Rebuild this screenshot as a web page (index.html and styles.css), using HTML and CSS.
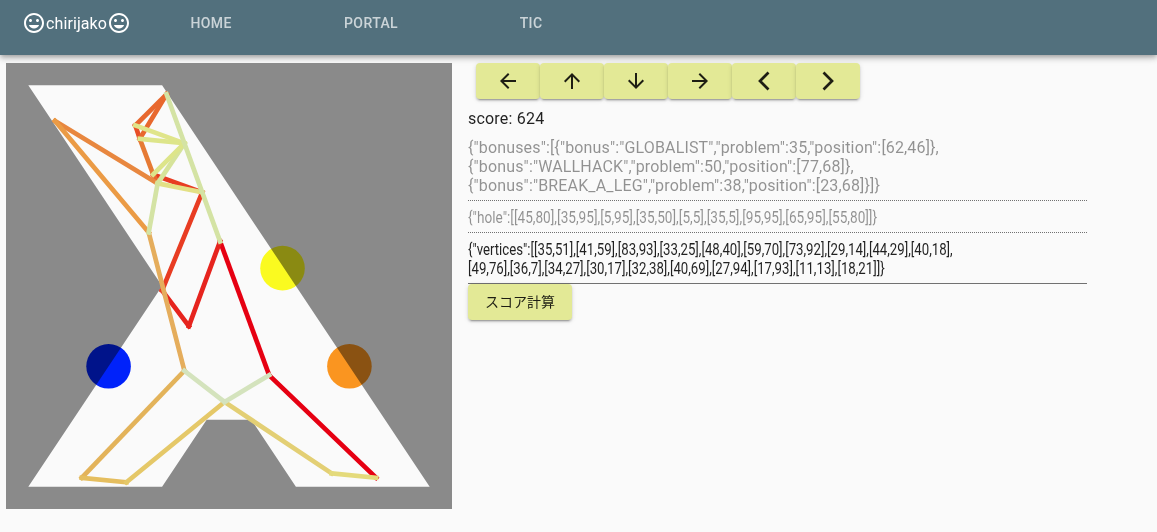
FILE: index.html
```html
<!DOCTYPE html>
<html lang="ja">
<head>
<meta charset="utf-8">
<title>chirijako</title>
<link rel="stylesheet" href="styles.css">
</head>
<body>
<header class="appbar">
  <div class="brand">
    <svg class="mood" viewBox="0 0 24 24"><path d="M11.99 2C6.47 2 2 6.48 2 12s4.47 10 9.99 10C17.52 22 22 17.52 22 12S17.52 2 11.99 2zM12 20c-4.42 0-8-3.58-8-8s3.58-8 8-8 8 3.58 8 8-3.58 8-8 8zm3.5-9c.83 0 1.5-.67 1.5-1.5S16.33 8 15.5 8 14 8.67 14 9.5s.67 1.5 1.5 1.5zm-7 0c.83 0 1.5-.67 1.5-1.5S9.33 8 8.5 8 7 8.67 7 9.5 7.67 11 8.5 11zm3.5 6.5c2.33 0 4.31-1.46 5.11-3.5H6.89c.8 2.04 2.78 3.5 5.11 3.5z"/></svg>
    <span class="brand-name">chirijako</span>
    <svg class="mood" viewBox="0 0 24 24"><path d="M11.99 2C6.47 2 2 6.48 2 12s4.47 10 9.99 10C17.52 22 22 17.52 22 12S17.52 2 11.99 2zM12 20c-4.42 0-8-3.58-8-8s3.58-8 8-8 8 3.58 8 8-3.58 8-8 8zm3.5-9c.83 0 1.5-.67 1.5-1.5S16.33 8 15.5 8 14 8.67 14 9.5s.67 1.5 1.5 1.5zm-7 0c.83 0 1.5-.67 1.5-1.5S9.33 8 8.5 8 7 8.67 7 9.5 7.67 11 8.5 11zm3.5 6.5c2.33 0 4.31-1.46 5.11-3.5H6.89c.8 2.04 2.78 3.5 5.11 3.5z"/></svg>
  </div>
  <nav class="tabs">
    <a class="tab">HOME</a>
    <a class="tab">PORTAL</a>
    <a class="tab">TIC</a>
  </nav>
</header>
<main class="content">
  <svg class="board" viewBox="0 0 100 100">
    <rect width="100" height="100" fill="#8a8a8a"/>
    <polygon fill="#fafafa" points="45,80 35,95 5,95 35,50 5,5 35,5 95,95 65,95 55,80"/>
    <g style="mix-blend-mode:multiply">
      <circle cx="62" cy="46" r="5" fill="#ffff20"/>
      <circle cx="77" cy="68" r="5" fill="#ff9820"/>
      <circle cx="23" cy="68" r="5" fill="#0022ff"/>
    </g>
    <g fill="none" stroke-width="1.05" stroke-linecap="square">
      <line x1="83" y1="93" x2="59" y2="70" stroke="#e60012"/>
      <line x1="59" y1="70" x2="48" y2="40" stroke="#e60012"/>
      <line x1="48" y1="40" x2="41" y2="59" stroke="#e6241e"/>
      <line x1="41" y1="59" x2="35" y2="51" stroke="#e6241e"/>
      <line x1="35" y1="51" x2="44" y2="29" stroke="#e83c22"/>
      <line x1="44" y1="29" x2="33" y2="25" stroke="#e83c22"/>
      <line x1="33" y1="25" x2="30" y2="17" stroke="#e67a34"/>
      <line x1="30" y1="17" x2="29" y2="14" stroke="#e84e26"/>
      <line x1="29" y1="14" x2="36" y2="7" stroke="#e8682e"/>
      <line x1="36" y1="7" x2="30" y2="17" stroke="#e8682e"/>
      <line x1="34" y1="27" x2="33" y2="25" stroke="#e8682e"/>
      <line x1="11" y1="13" x2="34" y2="27" stroke="#e8873f"/>
      <line x1="11" y1="13" x2="32" y2="38" stroke="#eb9b45"/>
      <line x1="40" y1="69" x2="32" y2="38" stroke="#e5ad5c"/>
      <line x1="40" y1="69" x2="17" y2="93" stroke="#e3b35a"/>
      <line x1="17" y1="93" x2="27" y2="94" stroke="#e5be5f"/>
      <line x1="27" y1="94" x2="49" y2="76" stroke="#e5c868"/>
      <line x1="49" y1="76" x2="73" y2="92" stroke="#e3cf74"/>
      <line x1="73" y1="92" x2="83" y2="93" stroke="#e4da7b"/>
      <line x1="34" y1="27" x2="44" y2="29" stroke="#e3e085"/>
      <line x1="32" y1="38" x2="34" y2="27" stroke="#d4e3a4"/>
      <line x1="34" y1="27" x2="40" y2="18" stroke="#d6e39a"/>
      <line x1="33" y1="25" x2="40" y2="18" stroke="#dde58a"/>
      <line x1="29" y1="14" x2="40" y2="18" stroke="#e0e58a"/>
      <line x1="30" y1="17" x2="40" y2="18" stroke="#dde58a"/>
      <line x1="36" y1="7" x2="48" y2="40" stroke="#d4e3a4"/>
      <line x1="40" y1="69" x2="49" y2="76" stroke="#d4e3bd"/>
      <line x1="49" y1="76" x2="59" y2="70" stroke="#d4e3bd"/>
    </g>
  </svg>
  <section class="panel">
    <div class="controls">
      <button class="btn icon-btn"><svg viewBox="0 0 24 24"><path d="M20 11H7.83l5.59-5.59L12 4l-8 8 8 8 1.41-1.41L7.83 13H20v-2z"/></svg></button>
      <button class="btn icon-btn"><svg viewBox="0 0 24 24"><path d="M4 12l1.41 1.41L11 7.83V20h2V7.83l5.58 5.59L20 12l-8-8-8 8z"/></svg></button>
      <button class="btn icon-btn"><svg viewBox="0 0 24 24"><path d="M20 12l-1.41-1.41L13 16.17V4h-2v12.17l-5.58-5.59L4 12l8 8 8-8z"/></svg></button>
      <button class="btn icon-btn"><svg viewBox="0 0 24 24"><path d="M12 4l-1.41 1.41L16.17 11H4v2h12.17l-5.58 5.59L12 20l8-8z"/></svg></button>
      <button class="btn icon-btn"><svg class="chevron" viewBox="0 0 24 24"><polyline points="16.5,3.5 8,12 16.5,20.5"/></svg></button>
      <button class="btn icon-btn"><svg class="chevron" viewBox="0 0 24 24"><polyline points="7.5,3.5 16,12 7.5,20.5"/></svg></button>
    </div>
    <p class="score">score: 624</p>
    <div class="field field-bonuses muted">{"bonuses":[{"bonus":"GLOBALIST","problem":35,"position":[62,46]},<br>{"bonus":"WALLHACK","problem":50,"position":[77,68]},<br>{"bonus":"BREAK_A_LEG","problem":38,"position":[23,68]}]}</div>
    <div class="field field-hole muted"><span class="squeeze squeeze-hole">{"hole":[[45,80],[35,95],[5,95],[35,50],[5,5],[35,5],[95,95],[65,95],[55,80]]}</span></div>
    <div class="field field-vertices"><span class="squeeze squeeze-vertices">{"vertices":[[35,51],[41,59],[83,93],[33,25],[48,40],[59,70],[73,92],[29,14],[44,29],[40,18],<br>[49,76],[36,7],[34,27],[30,17],[32,38],[40,69],[27,94],[17,93],[11,13],[18,21]]}</span></div>
    <button class="btn score-btn">スコア計算</button>
  </section>
</main>
</body>
</html>
```
FILE: styles.css
```css
* { box-sizing: border-box; }
html, body { margin: 0; padding: 0; }
body {
  background: #fafafa;
  font-family: Roboto, "Noto Sans CJK JP", sans-serif;
  color: rgba(0, 0, 0, 0.87);
  overflow: hidden;
  height: 532px;
}
.appbar {
  display: flex;
  height: 55px;
  background: #52707d;
  box-shadow: 0 2px 4px -1px rgba(0,0,0,.2), 0 4px 5px 0 rgba(0,0,0,.14), 0 1px 10px 0 rgba(0,0,0,.12);
  color: #fff;
  padding-left: 22px;
}
.brand {
  display: flex;
  align-items: center;
  height: 46px;
  font-size: 16px;
}
.brand-name { letter-spacing: 0.1px; }
.mood { width: 24px; height: 24px; fill: #fff; }
.tabs { display: flex; margin-left: 0; }
.tab {
  width: 160px;
  height: 46px;
  line-height: 46px;
  text-align: center;
  font-size: 14px;
  font-weight: 500;
  letter-spacing: 0.4px;
  color: rgba(255,255,255,.7);
}
.content {
  display: flex;
  align-items: flex-start;
  padding: 8px 0 0 6px;
  gap: 16px;
}
.board { display: block; width: 446px; height: 446px; flex: none; }
.panel { width: 619px; }
.controls { display: flex; padding-left: 8px; }
.btn {
  background: #e3e996;
  border: 0;
  border-radius: 4px;
  color: rgba(0,0,0,.87);
  font-family: inherit;
  box-shadow: 0 3px 1px -2px rgba(0,0,0,.2), 0 2px 2px 0 rgba(0,0,0,.14), 0 1px 5px 0 rgba(0,0,0,.12);
  display: flex;
  align-items: center;
  justify-content: center;
  padding: 0;
}
.icon-btn { width: 64px; height: 36px; }
.icon-btn svg { width: 24px; height: 24px; fill: rgba(0,0,0,.87); }
.icon-btn .chevron {
  fill: none;
  stroke: rgba(0,0,0,.87);
  stroke-width: 2.7;
}
.score {
  margin: 10px 0 0;
  font-size: 16px;
  letter-spacing: 0.2px;
  line-height: 20px;
}
.field {
  font-size: 16px;
  line-height: 19px;
  padding-bottom: 5px;
  white-space: nowrap;
}
.muted { color: rgba(0,0,0,.42); }
.field-bonuses {
  margin-top: 9px;
  letter-spacing: 0.15px;
  border-bottom: 1px dotted rgba(0,0,0,.55);
}
.field-hole {
  margin-top: 7px;
  border-bottom: 1px dotted rgba(0,0,0,.55);
}
.field-vertices {
  margin-top: 7px;
  border-bottom: 1px solid rgba(0,0,0,.55);
}
.squeeze {
  display: inline-block;
  vertical-align: top;
  transform-origin: 0 0;
}
.squeeze-hole { transform: scaleX(.85); }
.squeeze-vertices { transform: scaleX(.825); }
.score-btn {
  width: 104px;
  height: 36px;
  padding-bottom: 2px;
  font-size: 14px;
}
```
